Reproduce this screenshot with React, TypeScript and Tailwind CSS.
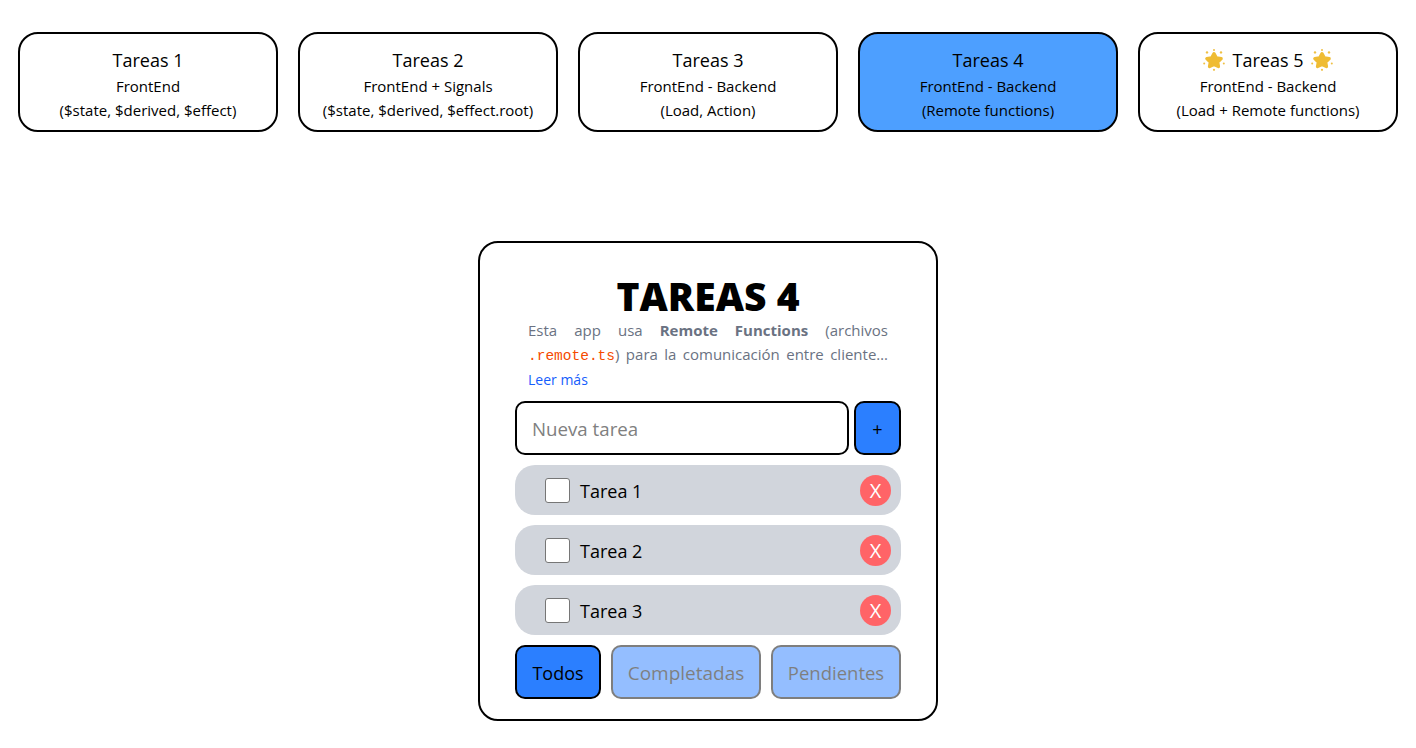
import * as React from "react";

const font = "font-['Open_Sans','Noto_Sans',sans-serif]";

const Star = () => (
  <svg width="22" height="22" viewBox="0 0 22 22" className="inline-block shrink-0">
    <polygon
      points="11,4.6 13.3,8.7 18.2,9.6 14.7,13 15.5,17.6 11,15.6 6.5,17.6 7.3,13 3.8,9.6 8.7,8.7"
      fill="#efbc33"
      stroke="#efbc33"
      strokeWidth="3.2"
      strokeLinejoin="round"
    />
    <circle cx="4" cy="3.4" r="1.2" fill="#efc044" />
    <circle cx="18" cy="3.4" r="1.2" fill="#efc044" />
    <circle cx="11" cy="1" r="1" fill="#efc044" />
    <circle cx="1.2" cy="14.4" r="1" fill="#efc044" />
    <circle cx="20.8" cy="14.4" r="1" fill="#efc044" />
    <circle cx="11" cy="20.8" r="1.1" fill="#efc044" />
  </svg>
);

const navCards = [
  { title: "Tareas 1", sub: "FrontEnd", detail: "($state, $derived, $effect)" },
  { title: "Tareas 2", sub: "FrontEnd + Signals", detail: "($state, $derived, $effect.root)" },
  { title: "Tareas 3", sub: "FrontEnd - Backend", detail: "(Load, Action)" },
  { title: "Tareas 4", sub: "FrontEnd - Backend", detail: "(Remote functions)", active: true },
  { title: "Tareas 5", sub: "FrontEnd - Backend", detail: "(Load + Remote functions)", star: true },
];

const tasks = ["Tarea 1", "Tarea 2", "Tarea 3"];

export default function App() {
  return (
    <div className={`${font} min-h-[748px] bg-white text-black`}>
      <nav className="flex justify-center gap-5 pt-8">
        {navCards.map((card) => (
          <a
            key={card.title}
            className={`flex h-[100px] w-[260px] flex-col items-center justify-center rounded-[20px] border-2 border-black pt-[3px] ${
              card.active ? "bg-[#4d9fff]" : "bg-white"
            }`}
          >
            <span className="flex h-7 items-center gap-2 text-[18px] leading-7">
              {card.star && <Star />}
              {card.title}
              {card.star && <Star />}
            </span>
            <span className="text-[15px] leading-6">{card.sub}</span>
            <span className="text-[15px] leading-6">{card.detail}</span>
          </a>
        ))}
      </nav>

      <main className="mx-auto mt-[109px] flex h-[480px] w-[460px] flex-col rounded-[20px] border-2 border-black px-[35px] pt-[30px]">
        <h1 className="text-center text-[39px] leading-[46px] font-extrabold">TAREAS 4</h1>
        <div className="mx-auto mt-[-1px] w-[360px] text-[15px] leading-6 text-[#6a7282]">
          <p className="text-justify [text-align-last:justify]">
            Esta app usa <strong className="font-bold">Remote Functions</strong> (archivos{" "}
            <code className="font-['Liberation_Mono',monospace] text-[14.5px] leading-none text-[#f54a00]">.remote.ts</code>) para la
            comunicación entre cliente…
          </p>
          <a className="mt-[2px] block text-[14px] leading-6 text-[#155dfc]">Leer más</a>
        </div>

        <form className="mt-[9px] flex gap-[5px]">
          <input
            placeholder="Nueva tarea"
            className="h-[54px] min-w-0 flex-1 rounded-[10px] border-2 border-black px-[15px] text-[18.7px] placeholder:text-[#808080]"
          />
          <button type="button" className="h-[54px] w-[47px] rounded-[10px] border-2 border-black bg-[#2b7fff] pt-[2px] text-[18px]">
            +
          </button>
        </form>

        <ul className="mt-[10px] flex flex-col gap-[10px]">
          {tasks.map((task) => (
            <li key={task} className="flex h-[50px] items-center rounded-[20px] bg-[#d1d5dc] pr-[10px] pl-[30px]">
              <span className="h-[25px] w-[25px] rounded-[3px] border border-[#767676] bg-white" />
              <span className="ml-[10px] flex-1 pt-[2px] text-[18px]">{task}</span>
              <button type="button" className="h-[31px] w-[31px] rounded-full bg-[#ff6467] text-[20px] leading-[31px] text-white">
                X
              </button>
            </li>
          ))}
        </ul>

        <div className="mt-[10px] flex justify-between">
          <button type="button" className="h-[54px] w-[86px] rounded-[10px] border-2 border-black bg-[#2b7fff] pt-[2px] text-[18px]">
            Todos
          </button>
          <button type="button" className="h-[54px] w-[150px] rounded-[10px] border-2 border-black bg-[#2b7fff] pt-[2px] text-[19px] opacity-50">
            Completadas
          </button>
          <button type="button" className="h-[54px] w-[130px] rounded-[10px] border-2 border-black bg-[#2b7fff] pt-[2px] text-[18.5px] opacity-50">
            Pendientes
          </button>
        </div>
      </main>
    </div>
  );
}
